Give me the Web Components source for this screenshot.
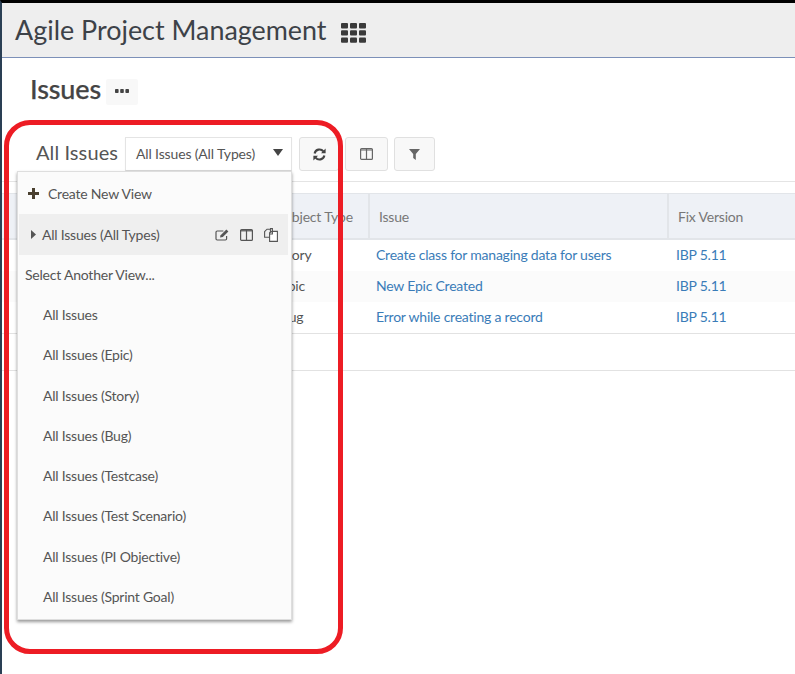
<!DOCTYPE html>
<html><head><meta charset="utf-8"><title>Issues</title>
<style>html,body{margin:0;padding:0;background:#fff;overflow:hidden}body{font-family:Lato,"Open Sans",sans-serif;color:#555}</style>
</head><body>
<app-shell>
  <app-header>Agile Project Management</app-header>
  <page-title>Issues</page-title>
  <issue-toolbar>
    <view-select slot="select" label="All Issues" value="All Issues (All Types)">
      <menu-item kind="create">Create New View</menu-item>
      <menu-item kind="active">All Issues (All Types)</menu-item>
      <menu-item kind="head">Select Another View...</menu-item>
      <menu-item>All Issues</menu-item>
      <menu-item>All Issues (Epic)</menu-item>
      <menu-item>All Issues (Story)</menu-item>
      <menu-item>All Issues (Bug)</menu-item>
      <menu-item>All Issues (Testcase)</menu-item>
      <menu-item>All Issues (Test Scenario)</menu-item>
      <menu-item>All Issues (PI Objective)</menu-item>
      <menu-item>All Issues (Sprint Goal)</menu-item>
    </view-select>
    <tool-button icon="refresh" style="width:40px"></tool-button>
    <tool-button icon="columns" style="width:43px"></tool-button>
    <tool-button icon="filter" style="width:41px"></tool-button>
  </issue-toolbar>
  <issue-table></issue-table>
</app-shell>
<script>
const ICONS={
 th:'<svg width="25" height="20" viewBox="0 0 25 20" fill="#3a3a3a"><rect x="0" y="0" width="7" height="5.4" rx="1"/><rect x="9" y="0" width="7" height="5.4" rx="1"/><rect x="18" y="0" width="7" height="5.4" rx="1"/><rect x="0" y="7.2" width="7" height="5.4" rx="1"/><rect x="9" y="7.2" width="7" height="5.4" rx="1"/><rect x="18" y="7.2" width="7" height="5.4" rx="1"/><rect x="0" y="14.4" width="7" height="5.4" rx="1"/><rect x="9" y="14.4" width="7" height="5.4" rx="1"/><rect x="18" y="14.4" width="7" height="5.4" rx="1"/></svg>',
 dots:'<svg width="14" height="4" viewBox="0 0 14 4" fill="#444"><rect width="3.6" height="4" rx=".8"/><rect x="5.2" width="3.6" height="4" rx=".8"/><rect x="10.4" width="3.6" height="4" rx=".8"/></svg>',
 refresh:'<svg width="13" height="13" viewBox="0 0 13 13" fill="none"><path d="M1.6 5.4A5 5 0 0 1 10.4 3.4" stroke="#444" stroke-width="2.1"/><path d="M12.6.6v4.6H8z" fill="#444"/><path d="M11.4 7.6A5 5 0 0 1 2.6 9.6" stroke="#444" stroke-width="2.1"/><path d="M.4 12.4V7.8H5z" fill="#444"/></svg>',
 columns:'<svg width="13" height="12" viewBox="0 0 13 12" fill="none" stroke="#666" stroke-width="1.2"><rect x=".6" y=".6" width="11.8" height="10.8" rx="1"/><path d="M6.5.6v10.8"/><path d="M.6 2h11.8" stroke-width="1"/></svg>',
 filter:'<svg width="11" height="11" viewBox="0 0 11 11" fill="#666"><path d="M0 0h11L6.8 5v6L4.2 9V5z"/></svg>',
 plus:'<svg width="11" height="11" viewBox="0 0 11 11" fill="#4a4030"><path d="M4 0h3v4h4v3H7v4H4V7H0V4h4z"/></svg>',
 caret:'<svg width="5" height="9" viewBox="0 0 5 9" fill="#555"><path d="M0 0l5 4.5L0 9z"/></svg>',
 down:'<svg width="10" height="7" viewBox="0 0 10 7" fill="#444"><path d="M0 0h10L5 7z"/></svg>',
 edit:'<svg width="14" height="12" viewBox="0 0 14 12" fill="none"><path d="M8.4 2H2.2A1.2 1.2 0 0 0 1 3.2v6.6A1.2 1.2 0 0 0 2.2 11h8.2a1.2 1.2 0 0 0 1.2-1.2V7" stroke="#555" stroke-width="1.2"/><path d="M5 8.4l.6-2.2L11.4.6l2 1.8-5.6 5.6z" fill="#555"/></svg>',
 cols:'<svg width="13" height="12" viewBox="0 0 13 12" fill="none" stroke="#555" stroke-width="1.2"><rect x=".6" y=".6" width="11.8" height="10.8" rx="1"/><path d="M6.5.6v10.8"/><path d="M.6 1.8h11.8"/></svg>',
 copy:'<svg width="14" height="14" viewBox="0 0 14 14" fill="#fff" stroke="#555" stroke-width="1.1"><path d="M.6 3.6L3 1.2h3.4v8H.6z" fill="none"/><path d="M6 .6h2.4v3.6" fill="none"/><path d="M5.6 4.8L8 3.4h5.4v10H5.6z"/><path d="M8.4 3.6v2.4H5.8" fill="none"/></svg>'
};
function def(name,html,init){customElements.define(name,class extends HTMLElement{
  connectedCallback(){ if(this.shadowRoot)return; const r=this.attachShadow({mode:'open'}); r.innerHTML=typeof html==='function'?html(this):html; if(init)init(this,r);} });}
def('svg-icon',h=>`<style>:host{display:inline-flex;align-items:center;justify-content:center;line-height:0}</style>${ICONS[h.getAttribute('name')]}`);
def('app-shell',`<style>
:host{display:block;position:relative;width:795px;height:674px;box-sizing:border-box;border-top:3px solid #000;border-left:2px solid #2a3f54;overflow:hidden}
.ring{position:absolute;left:2px;top:117px;width:339px;height:534px;box-sizing:border-box;border:5px solid #ed1c24;border-radius:26px;pointer-events:none;z-index:5}
</style><slot></slot><div class="ring"></div>`);
def('app-header',`<style>
:host{display:flex;align-items:center;gap:14px;box-sizing:border-box;padding:0 0 2px 13px;background:#eee;border-bottom:1px solid #7c90b8;color:#3d4248;font-size:26.9px;height:55px}
svg-icon{align-self:flex-start;margin-top:20px}
</style><span><slot></slot></span><svg-icon name="th"></svg-icon>`);
def('page-title',`<style>
:host{display:flex;align-items:center;gap:5px;margin:21px 0 0 28px;height:26px;color:#444;font-size:27px;letter-spacing:-.15px;font-weight:500;-webkit-text-stroke:.25px #444}
span{margin-top:-7px}
.b{width:32px;height:26px;background:#f8f8f8;border-radius:2px;display:flex;align-items:center;justify-content:center;padding-bottom:2px;box-sizing:border-box}
</style><span><slot></slot></span><div class="b"><svg-icon name="dots"></svg-icon></div>`);
def('issue-toolbar',`<style>
:host{display:flex;align-items:flex-start;gap:6px;margin:32px 0 0 34px;height:34px}
::slotted(view-select){margin-right:1px}
</style><slot name="select"></slot><slot></slot>`);
def('tool-button',h=>`<style>
:host{display:flex;align-items:center;justify-content:center;height:34px;box-sizing:border-box;background:#f8f8f8;border:1px solid #e0e0e0;border-radius:3px}
</style><svg-icon name="${h.getAttribute('icon')}"></svg-icon>`);
def('view-select',h=>`<style>
:host{display:flex;align-items:center;position:relative;gap:7px;height:34px}
.l{font-size:20px;color:#555;letter-spacing:.1px;margin-top:-5px}
.s{width:167px;height:34px;box-sizing:border-box;background:#fff;border:1px solid #e4e4e4;border-bottom-color:#d8d8d8;display:flex;align-items:center;justify-content:space-between;padding:0 8px 2px 10px;font-size:14px;letter-spacing:-.15px;color:#555;box-shadow:0 1px 1px rgba(0,0,0,.05)}
.m{position:absolute;left:-19px;top:34px;width:275px;height:449px;box-sizing:border-box;background:#fbfbfb;border:1px solid #dedede;box-shadow:0 2px 3px rgba(0,0,0,.4);z-index:3;padding:2px 3px 0 1px}
svg-icon{margin-top:-1px}
</style><span class="l">${h.getAttribute('label')}</span><div class="s"><span>${h.getAttribute('value')}</span><svg-icon name="down"></svg-icon></div><div class="m"><slot></slot></div>`);
def('menu-item',h=>{const k=h.getAttribute('kind')||'';
 const host={create:'height:39px;padding-left:9px;gap:9px',active:'height:41px;background:#efefef;padding:0 10px 0 12px;gap:6px;margin-top:1px',head:'height:39.5px;padding-left:6px;',"":'height:40.25px;padding-left:24px'}[k];
 const lead=k==='create'?'<svg-icon name="plus"></svg-icon>':k==='active'?'<svg-icon name="caret"></svg-icon>':'';
 const tail=k==='active'?'<div class="t"><svg-icon name="edit"></svg-icon><svg-icon name="cols"></svg-icon><svg-icon name="copy"></svg-icon></div>':'';
 return `<style>:host{display:flex;align-items:center;box-sizing:border-box;font-size:14px;letter-spacing:-.22px;color:#555;${host}}
 .t{margin-left:auto;display:flex;gap:11px;align-items:center}</style>${lead}<span><slot></slot></span>${tail}`;});
def('table-row',h=>`<style>
:host{display:grid;grid-template-columns:100px 299px 1fr;height:31px;align-items:center;font-size:14px;letter-spacing:-.22px;padding-left:268px;box-sizing:border-box;background:${h.hasAttribute('alt')?'#fbfbfb':'#fff'}}
span{padding-left:6px;white-space:nowrap;margin-top:-2px}.c1{padding-left:10px;color:#555}.a{color:#3a7cb8}
</style><span class="c1">${h.getAttribute('t')}</span><span class="a">${h.getAttribute('i')}</span><span class="a" style="padding-left:7px">IBP 5.11</span>`);
def('issue-table',`<style>
:host{display:block;margin-top:10px;border-top:1px solid #e4e4e4}
.h{display:grid;grid-template-columns:100px 299px 1fr;margin-top:11px;height:47px;box-sizing:border-box;padding-left:268px;background:#eef1f6;border-top:1px solid #e2e5e9;border-bottom:2px solid #e2e5e9;font-size:14px;letter-spacing:-.2px;color:#777}
.h span{display:flex;align-items:center;padding-left:9px;border-right:2px solid #e2e5e9;box-sizing:border-box}
.h span:first-child{padding-left:11px}
.h span:last-child{border-right:0}
.rows{border-bottom:1px solid #e2e2e2}
.gap{height:36px;border-bottom:1px solid #e2e2e2}
</style><div class="h"><span>Object Type</span><span>Issue</span><span>Fix Version</span></div>
<div class="rows"><table-row t="Story" i="Create class for managing data for users"></table-row><table-row alt t="Epic" i="New Epic Created"></table-row><table-row t="Bug" i="Error while creating a record"></table-row></div><div class="gap"></div>`);
</script>
</body></html>
